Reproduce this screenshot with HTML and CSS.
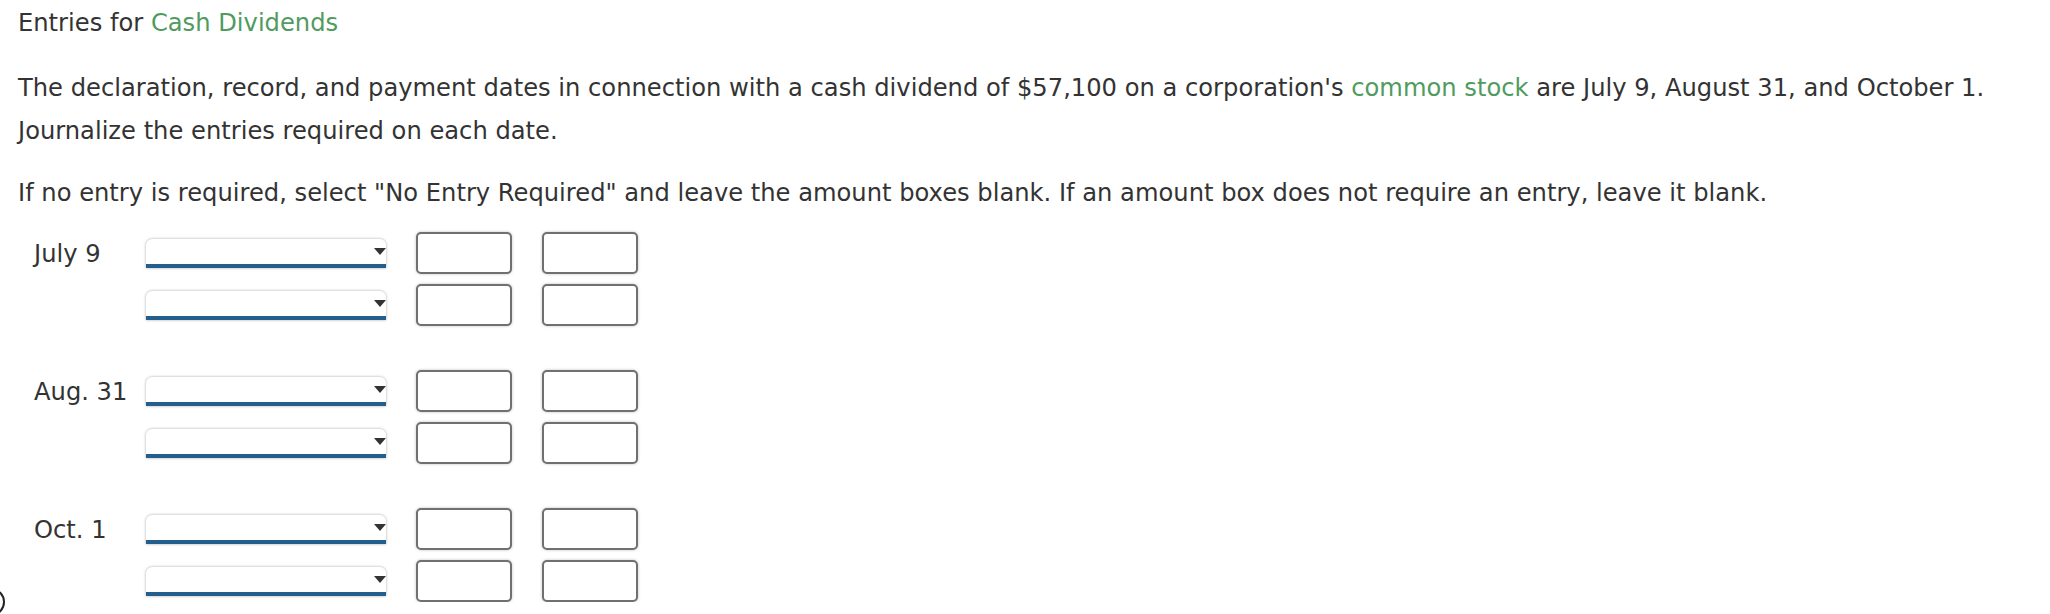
FILE: index.html
```html
<!DOCTYPE html>
<html>

<head>
    <link rel="stylesheet" href="styles.css">
    <title>Entries for Cash Dividends</title>
</head>

<body>
    <div class="title">Entries for <span class="term">Cash Dividends</span></div>
    <p class="intro">The declaration, record, and payment dates in connection with a cash dividend of $57,100 on a
        corporation's <span class="term">common stock</span> are July 9, August 31, and October 1.<br>Journalize the
        entries required on each date.</p>
    <p class="note">If no entry is required, select "No Entry Required" and leave the amount boxes blank. If an amount
        box does not require an entry, leave it blank.</p>

    <!-- one block per date, two journal lines each -->
    <div class="journal">
        <div class="group">
            <div class="line">
                <div class="date">July 9</div>
                <div class="pick"><span class="arrow"></span></div>
                <input class="amount" type="text">
                <input class="amount" type="text">
            </div>
            <div class="line">
                <div class="date"></div>
                <div class="pick"><span class="arrow"></span></div>
                <input class="amount" type="text">
                <input class="amount" type="text">
            </div>
        </div>
        <div class="group">
            <div class="line">
                <div class="date">Aug. 31</div>
                <div class="pick"><span class="arrow"></span></div>
                <input class="amount" type="text">
                <input class="amount" type="text">
            </div>
            <div class="line">
                <div class="date"></div>
                <div class="pick"><span class="arrow"></span></div>
                <input class="amount" type="text">
                <input class="amount" type="text">
            </div>
        </div>
        <div class="group">
            <div class="line">
                <div class="date">Oct. 1</div>
                <div class="pick"><span class="arrow"></span></div>
                <input class="amount" type="text">
                <input class="amount" type="text">
            </div>
            <div class="line">
                <div class="date"></div>
                <div class="pick"><span class="arrow"></span></div>
                <input class="amount" type="text">
                <input class="amount" type="text">
            </div>
        </div>
    </div>

    <div class="edge"></div>
</body>

</html>
```

FILE: styles.css
```css
html,
body {
    overflow: hidden;
}

body {
    margin: 0;
    padding: 2px 0 0 18px;
    background-color: white;
    color: rgb(51, 51, 51);
    font-family: "DejaVu Sans", Verdana, sans-serif;
    font-size: 24.2px;
    line-height: 43px;
}

.title {
    margin-bottom: 22px;
}

.term {
    color: rgb(80, 155, 96);
}

p {
    margin: 0;
}

.intro {
    margin-bottom: 19px;
}

.journal {
    margin-top: 17px;
    padding-left: 16px;
}

.group {
    display: flex;
    flex-direction: column;
    gap: 10px;
}

.group + .group {
    margin-top: 44px;
}

.line {
    display: flex;
    align-items: center;
    height: 42px;
}

.date {
    width: 112px;
    padding-top: 3px;
}

.pick {
    width: 240px;
    height: 25px;
    background-color: white;
    border-bottom: 4px solid rgb(35, 94, 140);
    border-radius: 6px 6px 0 0;
    box-shadow: rgba(0, 0, 0, 0.35) 0 0 3px;
    display: flex;
    justify-content: flex-end;
    align-items: flex-start;
    margin-right: 30px;
}

.arrow {
    width: 0;
    height: 0;
    margin-top: 9px;
    border-left: 6px solid transparent;
    border-right: 6px solid transparent;
    border-top: 7px solid rgb(51, 51, 51);
}

.amount {
    box-sizing: border-box;
    width: 96px;
    height: 42px;
    margin: 0 30px 0 0;
    padding: 0;
    border: 2px solid rgb(112, 112, 112);
    border-radius: 5px;
    box-shadow: rgba(0, 0, 0, 0.25) 0 0 3px;
    background-color: white;
}

.edge {
    position: absolute;
    left: -23px;
    top: 588px;
    width: 24px;
    height: 24px;
    border: 2px solid rgb(34, 34, 34);
    border-radius: 50%;
}
```
